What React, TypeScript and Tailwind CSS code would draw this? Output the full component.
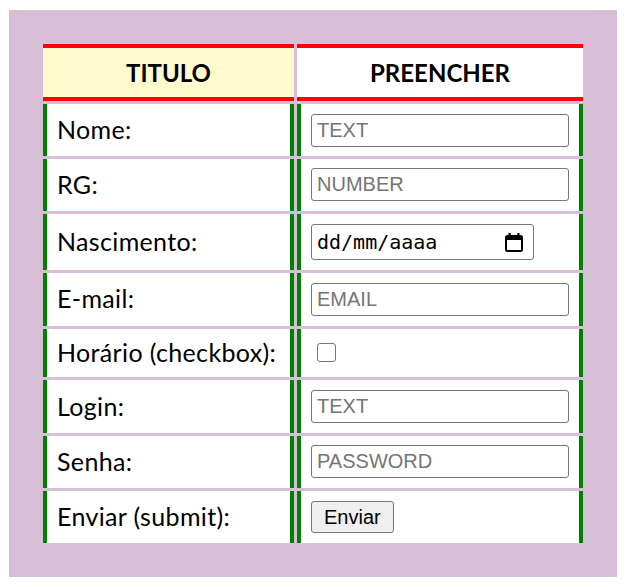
import React from "react";

function CalendarIcon() {
  return (
    <svg width="18" height="20" viewBox="0 0 18 20" fill="none">
      <rect x="1" y="4" width="16" height="15" rx="1.5" stroke="#000" strokeWidth="2" />
      <rect x="1" y="4" width="16" height="4" fill="#000" />
      <rect x="3.5" y="1" width="2.2" height="4" fill="#000" />
      <rect x="12.3" y="1" width="2.2" height="4" fill="#000" />
    </svg>
  );
}

const textInput =
  "w-full h-[33px] border border-[#767676] rounded-[3px] px-[5px] bg-white text-[20px] text-black font-['Liberation_Sans',Arial,sans-serif] placeholder:text-[#757575] outline-none";

type Row = { label: string; h: string; field: React.ReactNode };

export default function App() {
  const rows: Row[] = [
    { label: "Nome:", h: "h-[52px]", field: <input type="text" placeholder="TEXT" className={textInput} /> },
    { label: "RG:", h: "h-[51.5px]", field: <input type="text" placeholder="NUMBER" className={textInput} /> },
    {
      label: "Nascimento:",
      h: "h-[56px]",
      field: (
        <div className="w-[223px] h-[36px] border border-[#767676] rounded-[3px] bg-white flex items-center justify-between pl-[5px] pr-[10px]">
          <span className="text-[20px] text-black font-['DejaVu_Sans_Mono',monospace]">dd/mm/aaaa</span>
          <CalendarIcon />
        </div>
      ),
    },
    { label: "E-mail:", h: "h-[53px]", field: <input type="email" placeholder="EMAIL" className={textInput} /> },
    {
      label: "Horário (checkbox):",
      h: "h-[48.5px]",
      field: (
        <input
          type="checkbox"
          className="appearance-none ml-[6px] w-[19px] h-[19px] border-[1.5px] border-[#767676] rounded-[3px] bg-white"
        />
      ),
    },
    { label: "Login:", h: "h-[52.5px]", field: <input type="text" placeholder="TEXT" className={textInput} /> },
    { label: "Senha:", h: "h-[52.5px]", field: <input type="password" placeholder="PASSWORD" className={textInput} /> },
    {
      label: "Enviar (submit):",
      h: "h-[51.5px]",
      field: (
        <button
          type="button"
          className="h-[32px] px-[12px] border border-[#767676] rounded-[3px] bg-[#efefef] text-[20px] text-black font-['Liberation_Sans',Arial,sans-serif]"
        >
          Enviar
        </button>
      ),
    },
  ];

  return (
    <div className="min-h-[587px] bg-white pt-[10px] pl-[9px]">
      <div className="w-[608px] bg-[#d8bfd8] p-[34px] font-['Lato',sans-serif] text-black">
        <div className="grid grid-cols-[251px_286px] gap-[3px]">
          <div className="h-[57px] bg-[#fffacd] border-y-4 border-[#ff0000] flex items-center justify-center text-[24px] font-bold">
            TITULO
          </div>
          <div className="h-[57px] bg-white border-y-4 border-[#ff0000] flex items-center justify-center text-[24px] font-bold">
            PREENCHER
          </div>
          {rows.map((r) => (
            <React.Fragment key={r.label}>
              <div className={`${r.h} bg-white border-x-4 border-[#008000] flex items-center pl-[10px] text-[25px] tracking-[0.35px]`}>
                {r.label}
              </div>
              <div className={`${r.h} bg-white border-x-4 border-[#008000] flex items-center px-[10px]`}>
                {r.field}
              </div>
            </React.Fragment>
          ))}
        </div>
      </div>
    </div>
  );
}
